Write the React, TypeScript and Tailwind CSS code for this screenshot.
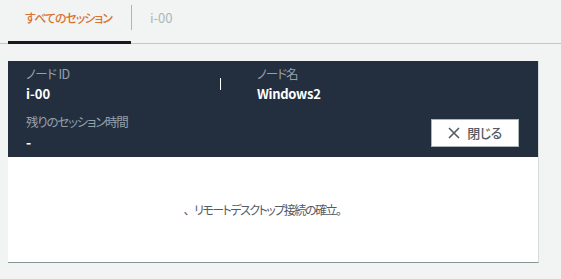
export default function App() {
  const jp = "font-['Noto_Sans_CJK_JP','Noto_Sans',sans-serif] [font-feature-settings:'palt']";
  return (
    <div className={`min-h-[279px] w-full bg-[#f2f3f3] ${jp}`}>
      <div className="flex h-[44px] border-b border-[#c4c8c8] px-2">
        <div className="relative flex items-center pl-[17px] pr-[19px]">
          <span className="text-[12px] font-medium tracking-[-1px] text-[#d8742f] leading-none -mt-2">すべてのセッション</span>
          <div className="absolute bottom-[-1px] left-0 right-0 h-[3px] bg-[#16191f]" />
        </div>
        <div className="mt-[5px] h-[25px] w-px bg-[#aab7b8]" />
        <div className="flex items-center pl-[18px]">
          <span className="text-[13px] text-[#aab7b8] leading-none -mt-2">i-00</span>
        </div>
      </div>

      <div className="mx-2 mt-[17px] w-[531px] border-r border-b border-r-[#d5dbdb] border-b-[#879596]">
        <div className="relative flex h-[96px] bg-[#232f3e] pl-[18px] pr-[19px] pt-[3px]">
          <div className="w-[231px]">
            <div className="text-[12.5px] tracking-[-0.6px] leading-[20px] text-[#95a0ab]">ノード&nbsp;ID</div>
            <div className="text-[13px] font-semibold leading-[20px] text-white">i-00</div>
            <div className="mt-[8px] text-[12.5px] tracking-[-1.2px] leading-[20px] text-[#95a0ab]">残りのセッション時間</div>
            <div className="text-[14px] font-semibold leading-[20px] text-white">-</div>
          </div>
          <div className="flex flex-1 flex-col">
            <div className="text-[12.5px] tracking-[-1px] leading-[20px] text-[#95a0ab]">ノード名</div>
            <div className="text-[13px] font-semibold tracking-[-0.3px] leading-[20px] text-white">Windows2</div>
            <div className="mt-auto mb-[10px] flex justify-end">
              <button className="flex h-[28px] w-[88px] items-center justify-center gap-[7px] border border-[#aab7b8] bg-white text-[13px] font-medium tracking-[-0.5px] text-[#545b64]">
                <svg width="12" height="12" viewBox="0 0 12 12" fill="none" stroke="#545b64" strokeWidth="1.6">
                  <path d="M1 1L11 11M11 1L1 11" />
                </svg>
                閉じる
              </button>
            </div>
          </div>
          <div className="absolute left-[212px] top-[17px] h-[12px] w-px bg-white" />
        </div>
        <div className="flex h-[105px] items-center justify-center bg-white">
          <span className="-ml-[22px] flex items-center gap-[6px] text-[12px] tracking-[-1.5px] text-[#545b64]">
            <span>、</span>
            <span>リモートデスクトップ接続の確立。</span>
          </span>
        </div>
      </div>
    </div>
  );
}
